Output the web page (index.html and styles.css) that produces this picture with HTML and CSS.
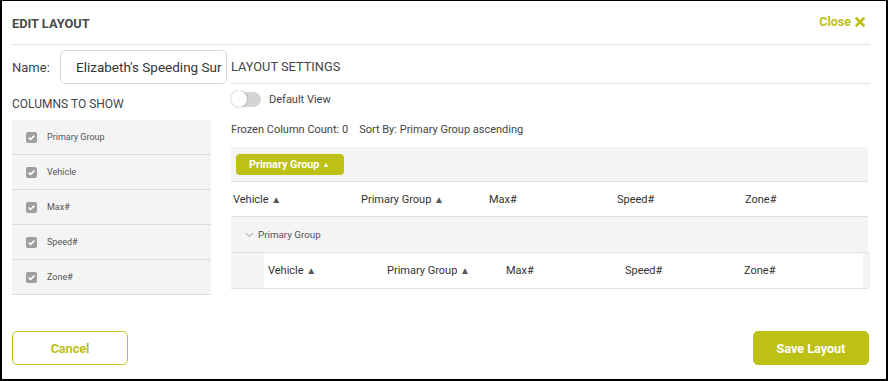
FILE: index.html
```html
<!DOCTYPE html>
<html>
<head>
<meta charset="utf-8">
<link rel="stylesheet" href="styles.css">
</head>
<body>
<div class="dialog">
  <div class="header">
    <div class="title">EDIT LAYOUT</div>
    <div class="close">Close
      <svg class="x" viewBox="0 0 10 10" width="10" height="10"><path d="M1.5 1.5 L8.5 8.5 M8.5 1.5 L1.5 8.5" stroke="#bdc015" stroke-width="2.6" stroke-linecap="square" fill="none"/></svg>
    </div>
  </div>
  <div class="body">
    <div class="left">
      <div class="name-row">
        <span class="name-label">Name:</span>
        <div class="name-input">Elizabeth's Speeding Sur</div>
      </div>
      <div class="cols-title">COLUMNS TO SHOW</div>
      <div class="col-list">
        <div class="col-item"><span class="cb"><svg viewBox="0 0 11 11" width="11" height="11"><path d="M2.6 5.6 L4.6 7.4 L8.4 3.6" stroke="#fff" stroke-width="1.6" fill="none"/></svg></span><span>Primary Group</span></div>
        <div class="col-item"><span class="cb"><svg viewBox="0 0 11 11" width="11" height="11"><path d="M2.6 5.6 L4.6 7.4 L8.4 3.6" stroke="#fff" stroke-width="1.6" fill="none"/></svg></span><span>Vehicle</span></div>
        <div class="col-item"><span class="cb"><svg viewBox="0 0 11 11" width="11" height="11"><path d="M2.6 5.6 L4.6 7.4 L8.4 3.6" stroke="#fff" stroke-width="1.6" fill="none"/></svg></span><span>Max#</span></div>
        <div class="col-item"><span class="cb"><svg viewBox="0 0 11 11" width="11" height="11"><path d="M2.6 5.6 L4.6 7.4 L8.4 3.6" stroke="#fff" stroke-width="1.6" fill="none"/></svg></span><span>Speed#</span></div>
        <div class="col-item"><span class="cb"><svg viewBox="0 0 11 11" width="11" height="11"><path d="M2.6 5.6 L4.6 7.4 L8.4 3.6" stroke="#fff" stroke-width="1.6" fill="none"/></svg></span><span>Zone#</span></div>
      </div>
    </div>
    <div class="right">
      <div class="settings-title">LAYOUT SETTINGS</div>
      <div class="toggle-row">
        <span class="toggle"><span class="knob"></span></span>
        <span>Default View</span>
      </div>
      <div class="info">Frozen Column Count: 0<span class="gap"></span>Sort By: Primary Group ascending</div>
      <div class="grid">
        <div class="group-panel">
          <span class="chip">Primary Group <span class="tri-w">▲</span></span>
        </div>
        <div class="hdr-row">
          <span class="hc w128">Vehicle <span class="tri">▲</span></span>
          <span class="hc w128">Primary Group <span class="tri">▲</span></span>
          <span class="hc w128">Max#</span>
          <span class="hc w128">Speed#</span>
          <span class="hc w128">Zone#</span>
        </div>
        <div class="grp-row">
          <svg class="chev" viewBox="0 0 10 6" width="9" height="6"><path d="M1 1 L5 4.6 L9 1" stroke="#bbb" stroke-width="1.3" fill="none"/></svg>
          <span>Primary Group</span>
        </div>
        <div class="det-row">
          <span class="indent"></span>
          <div class="det-cells">
            <span class="hc w119">Vehicle <span class="tri">▲</span></span>
            <span class="hc w119">Primary Group <span class="tri">▲</span></span>
            <span class="hc w119">Max#</span>
            <span class="hc w119">Speed#</span>
            <span class="hc w119">Zone#</span>
          </div>
          <span class="scroll"></span>
        </div>
      </div>
    </div>
  </div>
  <div class="footer">
    <button class="btn cancel">Cancel</button>
    <button class="btn save">Save Layout</button>
  </div>
</div>
</body>
</html>
```

FILE: styles.css
```css
* { box-sizing: border-box; }
html, body { margin: 0; padding: 0; background: #fff; }
body { font-family: Roboto, "Liberation Sans", Arial, sans-serif; color: #444; }

.dialog {
  width: 888px;
  height: 381px;
  border: 2px solid #000;
  border-top-width: 1px;
  padding: 0 16px 0 10px;
  display: flex;
  flex-direction: column;
}

.header {
  height: 44px;
  border-bottom: 1px solid #e3e3e3;
  display: flex;
  align-items: center;
  justify-content: space-between;
  padding-right: 5px;
}
.title { font-size: 12.8px; font-weight: 700; color: #4a4a4a; padding-top: 2px; }
.close { font-size: 12.5px; font-weight: 700; color: #bdc015; display: flex; align-items: center; gap: 4px; margin-top: -2px; }
.close .x { display: block; }

.body { display: flex; gap: 4px; }

.left { width: 215px; flex: none; }
.name-row { display: flex; align-items: center; margin-top: 5px; height: 34px; }
.name-label { font-size: 13px; color: #444; width: 48px; flex: none; }
.name-input {
  width: 167px;
  flex: none;
  height: 34px;
  border: 1px solid #d9d9d9;
  border-radius: 5px;
  font-size: 13.5px;
  color: #333;
  padding: 0 0 0 15px;
  display: flex;
  align-items: center;
  white-space: nowrap;
  overflow: hidden;
}
.cols-title { font-size: 12px; color: #444; margin-top: 12px; height: 16px; line-height: 16px; }
.col-list { width: 199px; margin-top: 8px; background: #f4f4f4; }
.col-item {
  height: 35px;
  border-bottom: 1px solid #ddd;
  display: flex;
  align-items: center;
  padding-left: 14px;
  font-size: 9px;
  color: #555;
  gap: 10px;
}
.cb { width: 11px; height: 11px; background: #9e9e9e; border-radius: 2px; display: block; }
.cb svg { display: block; }

.right { flex: 1; }
.settings-title {
  margin-top: 5px;
  height: 34px;
  border-bottom: 1px solid #e3e3e3;
  display: flex;
  align-items: center;
  font-size: 12.8px;
  color: #444;
}
.toggle-row { display: flex; align-items: center; gap: 8px; margin-top: 7px; height: 16px; font-size: 11px; color: #444; }
.toggle { width: 30px; height: 15px; border-radius: 8px; background: #d4d4d4; position: relative; display: block; }
.knob { position: absolute; left: 0; top: -0.5px; width: 16px; height: 16px; border-radius: 50%; background: #fff; box-shadow: 0 0 2px rgba(0,0,0,0.35); }
.info { font-size: 11px; color: #444; margin-top: 16px; height: 14px; line-height: 14px; }
.gap { display: inline-block; width: 11px; }

.grid { margin-top: 10px; width: 637px; }
.group-panel {
  height: 35px;
  background: #f4f4f4;
  border-bottom: 1px solid #e0e0e0;
  padding: 6px 0 0 5px;
}
.chip {
  display: inline-flex;
  align-items: center;
  height: 21px;
  width: 108px;
  border-radius: 4px;
  background: #bdc015;
  color: #fff;
  font-size: 10.8px;
  font-weight: 700;
  padding-left: 13px;
  gap: 3px;
}
.tri-w { font-size: 7px; }
.hdr-row {
  height: 35px;
  border-bottom: 1px solid #e0e0e0;
  display: flex;
  align-items: center;
  padding-left: 2px;
}
.hc { font-size: 11px; color: #333; flex: none; }
.w128 { width: 128px; }
.w119 { width: 119px; }
.tri { font-size: 10px; color: #555; }
.grp-row {
  height: 36px;
  background: #f4f4f4;
  border-bottom: 1px solid #e0e0e0;
  display: flex;
  align-items: center;
  padding-left: 14px;
  gap: 4px;
  font-size: 9.8px;
  color: #555;
}
.chev { display: block; margin-top: 1px; }
.det-row {
  height: 36px;
  border-bottom: 1px solid #e0e0e0;
  display: flex;
}
.indent { width: 33px; background: #f4f4f4; flex: none; }
.det-cells { flex: 1; display: flex; align-items: center; padding-left: 4px; }
.scroll { width: 7px; background: #f4f4f4; flex: none; }

.footer {
  margin-top: auto;
  margin-bottom: 14px;
  display: flex;
  justify-content: space-between;
  padding-right: 1px;
}
.btn {
  width: 116px;
  height: 34px;
  border-radius: 5px;
  font-family: Roboto, "Liberation Sans", Arial, sans-serif;
  font-size: 12.6px;
  font-weight: 700;
  cursor: pointer;
}
.cancel { background: #fff; border: 1px solid #bdc015; color: #bdc015; }
.save { background: #bdc015; border: 1px solid #bdc015; color: #fff; }
```
